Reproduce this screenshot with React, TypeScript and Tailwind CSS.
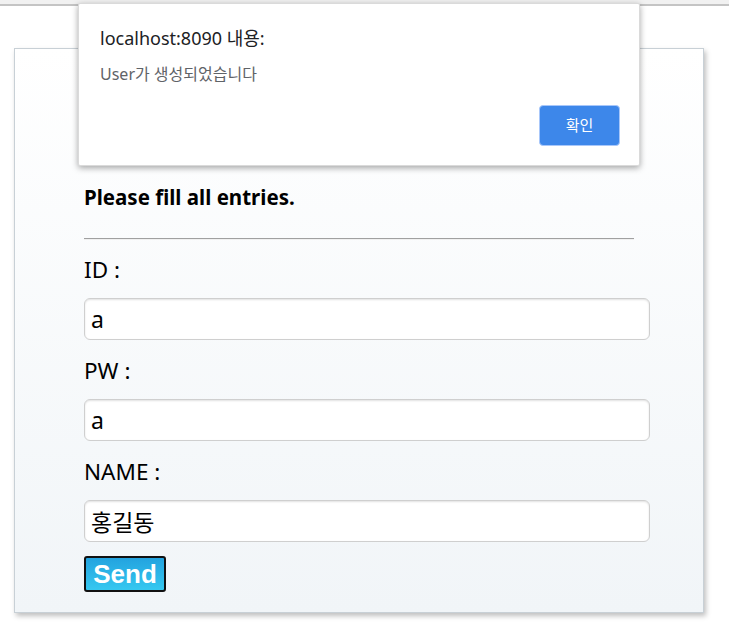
import { useState } from 'react';

const font = { fontFamily: '"Noto Sans", "Noto Sans CJK KR", sans-serif' };

function Field({
  label,
  value,
  onChange,
}: {
  label: string;
  value: string;
  onChange: (v: string) => void;
}) {
  return (
    <div className="flex flex-col">
      <label className="mt-[16px] h-[30px] text-[22.5px] leading-[30px] text-black">
        {label}
      </label>
      <input
        className="mt-[13px] h-[42px] w-[566px] rounded-[6px] border border-[#cfcfcf] bg-white px-[6px] text-[23px] text-black shadow-[inset_0_1px_2px_rgba(0,0,0,0.12)] outline-none"
        value={value}
        onChange={(e) => onChange(e.target.value)}
      />
    </div>
  );
}

export default function App() {
  const [id, setId] = useState('a');
  const [pw, setPw] = useState('a');
  const [name, setName] = useState('홍길동');

  return (
    <div className="relative min-h-[634px] w-[729px] bg-white" style={font}>
      <div className="h-[6px] border-b-2 border-[#c4c4c4] bg-[#f1f1f1]" />

      <div className="ml-[14px] mt-[42px] flex h-[565px] w-[690px] flex-col border border-[#c8d0d6] bg-gradient-to-b from-white to-[#f1f5f8] px-[69px] pt-[134px] shadow-[2px_3px_5px_rgba(0,0,0,0.25)]">
        <h3 className="h-[28px] text-[20.5px] font-bold leading-[28px] text-black">
          Please fill all entries.
        </h3>
        <hr className="mt-[27px] w-[550px] border-t border-b border-t-[#a0a0a0] border-b-[#f0f0f0]" />
        <div className="-mt-[1px]">
          <Field label="ID :" value={id} onChange={setId} />
          <Field label="PW :" value={pw} onChange={setPw} />
          <Field label="NAME :" value={name} onChange={setName} />
        </div>
        <button
          className="mt-[14px] h-[36px] w-[82px] rounded-[3px] border-2 border-[#111] bg-gradient-to-b from-[#23a3df] to-[#36c8f0] text-[26px] font-bold leading-none text-white"
          style={{ fontFamily: '"Liberation Sans", Arial, sans-serif' }}
        >
          Send
        </button>
      </div>

      <div className="absolute left-[78px] top-[3px] h-[163px] w-[562px] rounded-[2px] border border-[#dadada] bg-white shadow-[0_2px_6px_rgba(0,0,0,0.35)]">
        <div className="ml-[21px] mt-[22px] text-[18px] leading-[24px] text-[#202124]">
          localhost:8090 내용:
        </div>
        <div className="ml-[21px] mt-[13px] text-[16px] leading-[22px] text-[#5f6368]">
          User가 생성되었습니다
        </div>
        <div className="mr-[19px] mt-[20px] flex justify-end">
          <button className="h-[41px] w-[81px] rounded-[4px] border border-[#a8c7fa] bg-[#3d87ea] text-[15px] text-white">
            확인
          </button>
        </div>
      </div>
    </div>
  );
}
